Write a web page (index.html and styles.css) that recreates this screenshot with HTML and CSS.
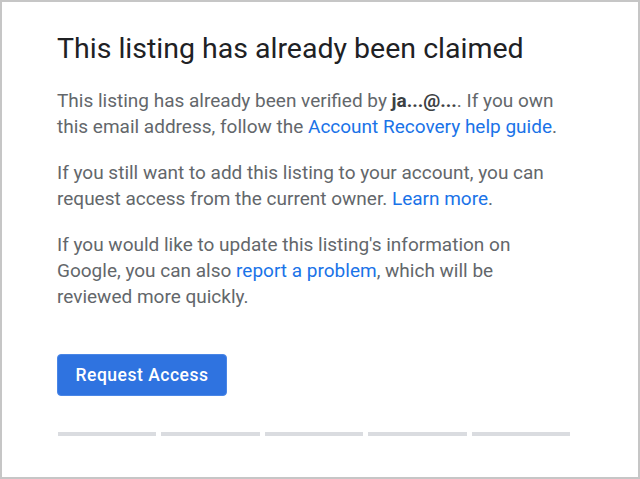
FILE: index.html
```html
<!DOCTYPE html>
<html lang="en">
<head>
    <meta charset="UTF-8">
    <meta name="viewport" content="width=device-width, initial-scale=1.0">
    <title>Listing already claimed</title>
    <link rel="stylesheet" href="styles.css">
</head>
<body>
    <div class="frame">
        <div class="content">
            <h1 class="title">This listing has already been claimed</h1>
            <p class="text">This listing has already been verified by <b>ja...@...</b>. If you own this email address, follow the <a href="#">Account Recovery help guide</a>.</p>
            <p class="text">If you still want to add this listing to your account, you can request access from the current owner. <a href="#">Learn more</a>.</p>
            <p class="text">If you would like to update this listing's information on Google, you can also <a href="#">report a problem</a>, which will be reviewed more quickly.</p>
            <button class="btn">Request Access</button>
            <div class="steps">
                <span class="step"></span>
                <span class="step"></span>
                <span class="step"></span>
                <span class="step"></span>
                <span class="step"></span>
            </div>
        </div>
    </div>
</body>
</html>
```

FILE: styles.css
```css
* {
    box-sizing: border-box;
}

body {
    margin: 0;
    background-color: #ffffff;
    font-family: Roboto, "Liberation Sans", sans-serif;
}

.frame {
    width: 640px;
    height: 479px;
    border: 2px solid #c6c6c6;
    background-color: #ffffff;
}

.content {
    padding: 29px 68px 0 55px;
}

.title {
    margin: 0 0 21px 0;
    font-size: 28.5px;
    font-weight: 400;
    color: #202124;
    line-height: 36px;
}

.text {
    margin: 0 0 20px 0;
    font-size: 19px;
    line-height: 26px;
    color: #63676b;
}

.text b {
    color: #3c4043;
    font-weight: 700;
}

.text a {
    color: #1a73e8;
    text-decoration: none;
}

.btn {
    display: block;
    margin-top: 44px;
    width: 170px;
    height: 42px;
    border: 1px solid #4a86e6;
    border-radius: 4px;
    background-color: #2f73e0;
    color: #ffffff;
    font-family: Roboto, "Liberation Sans", sans-serif;
    font-size: 17.5px;
    font-weight: 500;
    letter-spacing: 0.5px;
}

.steps {
    display: flex;
    gap: 5px;
    margin-top: 36px;
    margin-left: 1px;
    width: 512px;
}

.step {
    flex: 1;
    height: 4px;
    background-color: #dadce0;
}
```
